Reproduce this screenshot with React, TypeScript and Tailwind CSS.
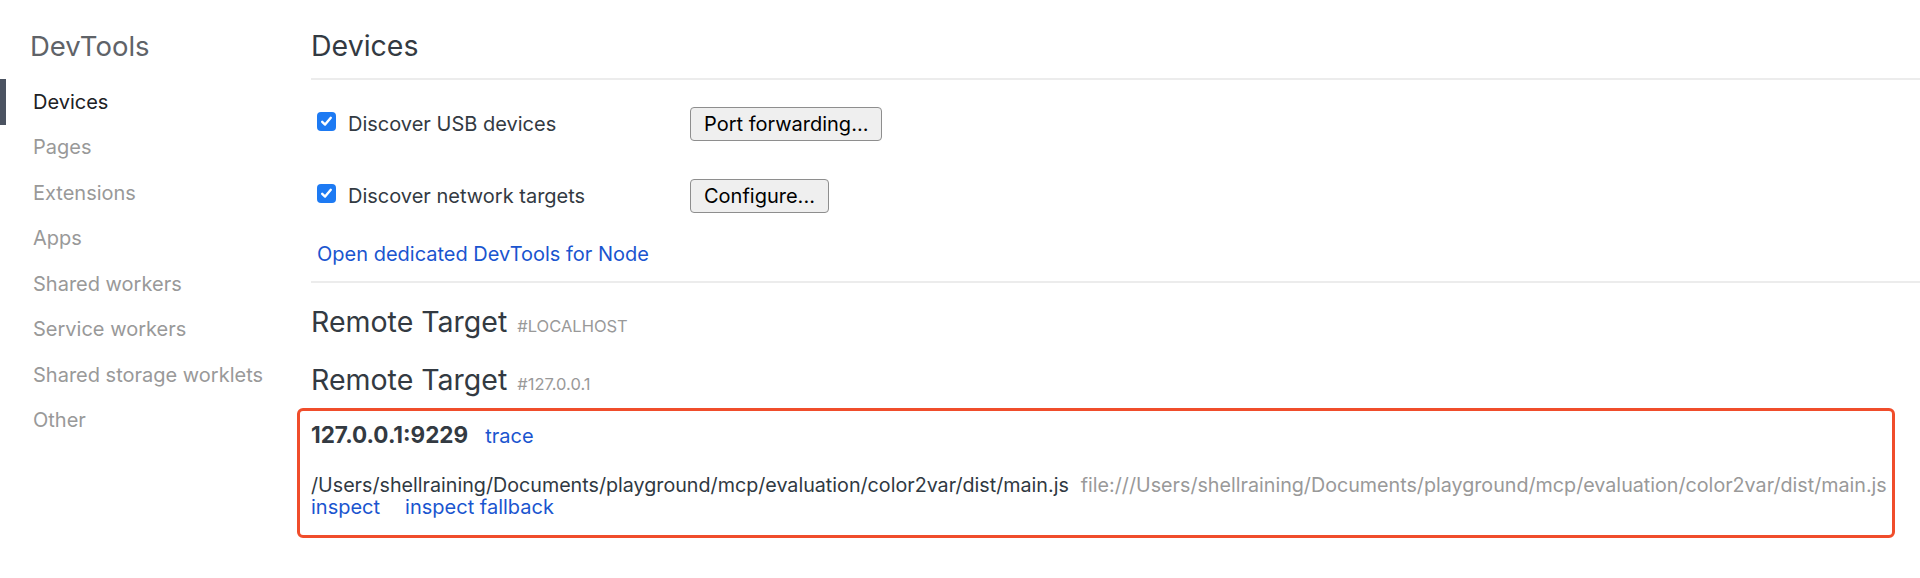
import React from "react";

const sideItems = [
  "Devices",
  "Pages",
  "Extensions",
  "Apps",
  "Shared workers",
  "Service workers",
  "Shared storage worklets",
  "Other",
];

const CheckBox = () => (
  <span className="mb-[5px] flex h-[19px] w-[19px] shrink-0 items-center justify-center rounded-[4px] bg-[#1d7af3]">
    <svg width="13" height="13" viewBox="0 0 13 13" fill="none">
      <path
        d="M2.2 6.8 L5.1 9.6 L10.8 2.8"
        stroke="white"
        strokeWidth="2.4"
        strokeLinecap="round"
        strokeLinejoin="round"
      />
    </svg>
  </span>
);

const OptionRow = ({ label, button }: { label: string; button: string }) => (
  <div className="flex h-[34px] items-center pl-[6px]">
    <CheckBox />
    <span className="ml-[12px] w-[342px] text-[20px] text-[#333a42]">
      {label}
    </span>
    <button className="h-[34px] rounded-[4px] border border-[#8e8e8e] bg-[#efefef] px-[13px] text-[20px] text-black">
      {button}
    </button>
  </div>
);

const SideBar = () => (
  <div className="w-[311px] shrink-0">
    <h2 className="pl-[30px] pt-[26px] text-[27.5px] leading-[40px] text-[#5f6368]">
      DevTools
    </h2>
    <ul className="mt-[13px]">
      {sideItems.map((item, i) => (
        <li
          key={item}
          className={
            i === 0
              ? "flex h-[45.5px] items-center border-l-[6px] border-[#4b5361] pl-[27px] text-[20px] text-[#202124]"
              : "flex h-[45.5px] items-center pl-[33px] text-[20px] text-[#999999]"
          }
        >
          {item}
        </li>
      ))}
    </ul>
  </div>
);

const TargetHeading = ({ tag }: { tag: string }) => (
  <h2 className="flex h-[40px] items-baseline gap-[10px] text-[28.5px] leading-[40px] text-[#333a42]">
    Remote Target
    <span className="text-[16.5px] leading-none text-[#999999]">{tag}</span>
  </h2>
);

export default function App() {
  return (
    <div className="flex min-h-[578px] w-full bg-white font-['Inter',sans-serif]">
      <SideBar />
      <main className="flex-1 pt-[26px]">
        <h1 className="text-[28.5px] leading-[40px] text-[#333a42]">Devices</h1>
        <div className="mt-[12px] h-[2px] bg-[#ececec]" />

        <div className="mt-[27px]">
          <OptionRow label="Discover USB devices" button="Port forwarding..." />
        </div>
        <div className="mt-[38px]">
          <OptionRow label="Discover network targets" button="Configure..." />
        </div>
        <a className="mt-[29px] block pl-[6px] text-[20px] leading-[24px] text-[#1a55cf]">
          Open dedicated DevTools for Node
        </a>
        <div className="mt-[15px] h-[2px] bg-[#ececec]" />

        <div className="mt-[19px]">
          <TargetHeading tag="#LOCALHOST" />
        </div>
        <div className="mt-[18px]">
          <TargetHeading tag="#127.0.0.1" />
        </div>

        <div className="-ml-[14px] mr-[25px] mt-[8px] rounded-[6px] border-[3px] border-[#f04d2b] pb-[17px] pl-[11px] pt-[10px]">
          <div className="flex h-[28px] items-baseline gap-[17px] leading-[28px]">
            <span className="text-[22.5px] font-bold text-[#333a42]">127.0.0.1:9229</span>
            <a className="text-[20px] leading-none text-[#1a55cf]">trace</a>
          </div>
          <div className="mt-[25px] flex gap-[12px] text-[19.7px] leading-[22px]">
            <span className="text-[#303942]">
              /Users/shellraining/Documents/playground/mcp/evaluation/color2var/dist/main.js
            </span>
            <span className="text-[#999999]">
              file:///Users/shellraining/Documents/playground/mcp/evaluation/color2var/dist/main.js
            </span>
          </div>
          <div className="flex gap-[25px] text-[20px] leading-[22px] text-[#1a55cf]">
            <a>inspect</a>
            <a>inspect fallback</a>
          </div>
        </div>
      </main>
    </div>
  );
}
